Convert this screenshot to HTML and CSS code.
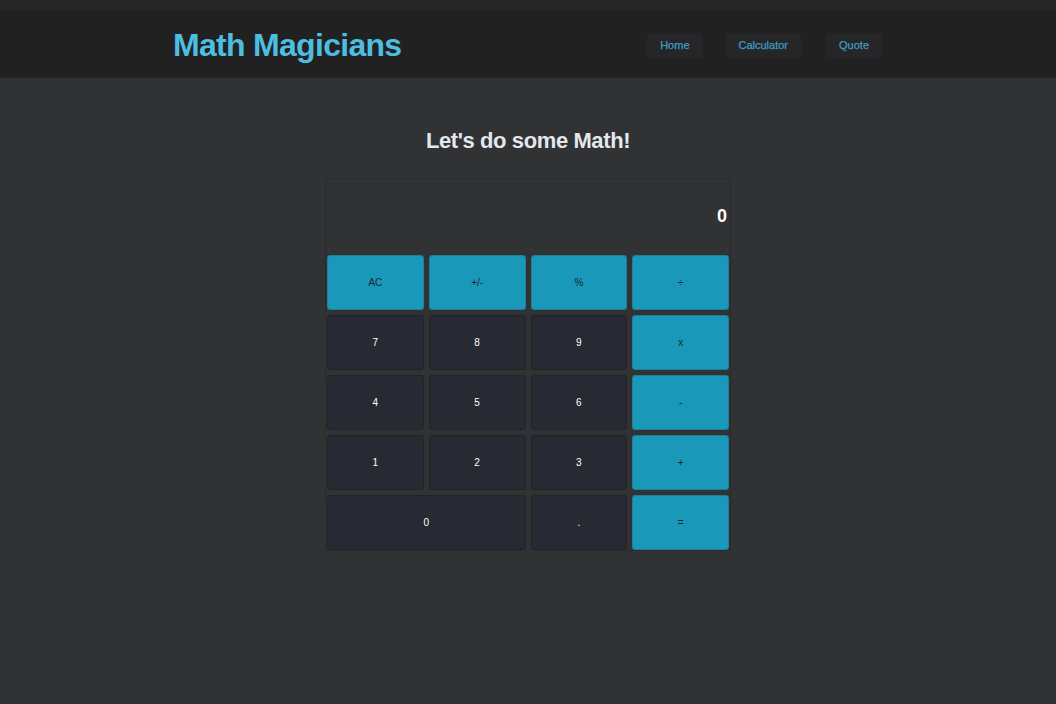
FILE: index.html
```html
<!DOCTYPE html>
<html lang="en">
<head>
<meta charset="utf-8">
<title>Math Magicians</title>
<link rel="stylesheet" href="styles.css">
</head>
<body>
<header class="site-header">
  <div class="header-inner">
    <h1 class="logo">Math Magicians</h1>
    <nav class="nav">
      <a class="nav-link" href="#">Home</a>
      <a class="nav-link" href="#">Calculator</a>
      <a class="nav-link" href="#">Quote</a>
    </nav>
  </div>
</header>
<main class="main">
  <h2 class="heading">Let's do some Math!</h2>
  <div class="calculator">
    <div class="display">0</div>
    <button class="key op">AC</button>
    <button class="key op">+/-</button>
    <button class="key op">%</button>
    <button class="key op">÷</button>
    <button class="key">7</button>
    <button class="key">8</button>
    <button class="key">9</button>
    <button class="key op">x</button>
    <button class="key">4</button>
    <button class="key">5</button>
    <button class="key">6</button>
    <button class="key op">-</button>
    <button class="key">1</button>
    <button class="key">2</button>
    <button class="key">3</button>
    <button class="key op">+</button>
    <button class="key wide">0</button>
    <button class="key">.</button>
    <button class="key op">=</button>
  </div>
</main>
</body>
</html>
```

FILE: styles.css
```css
* { box-sizing: border-box; }
html, body { margin: 0; padding: 0; }
body {
  background: #313234;
  font-family: "Liberation Sans", Arial, sans-serif;
  min-height: 704px;
}
.site-header {
  background: #212122;
  border-top: 10px solid #262628;
  height: 78px;
}
.header-inner {
  width: 710px;
  margin: 0 auto;
  height: 68px;
  display: flex;
  align-items: center;
  justify-content: space-between;
  padding-right: 1px;
}
.logo {
  margin: 0;
  color: #4dbde0;
  font-size: 32px;
  font-weight: bold;
  letter-spacing: -0.7px;
  padding-top: 2px;
}
.nav { display: flex; gap: 23px; padding-top: 2px; }
.nav-link {
  display: block;
  background: #262527;
  color: #3a9fc6;
  text-decoration: none;
  font-size: 11px;
  font-weight: normal;
  -webkit-text-stroke: 0.25px #3a9fc6;
  height: 25px;
  line-height: 25px;
  padding: 0 13px;
  border-radius: 3px;
}
.nav-link + .nav-link + .nav-link { margin-left: 2px; }
.main {
  display: flex;
  flex-direction: column;
  align-items: center;
  padding-top: 48px;
}
.heading {
  margin: 0 0 22px;
  color: #e3e8ee;
  font-size: 22px;
  font-weight: bold;
  letter-spacing: -0.4px;
  line-height: 30px;
}
.calculator {
  width: 406px;
  border: 1px solid #2a2b31;
  display: grid;
  grid-template-columns: repeat(4, 1fr);
  grid-template-rows: 71px repeat(5, 55px);
  column-gap: 5px;
  row-gap: 5px;
  padding: 0 1px 0 1px;
}
.display {
  grid-column: 1 / 5;
  display: flex;
  align-items: center;
  justify-content: flex-end;
  padding: 4px 2px 0 0;
  color: #ffffff;
  font-size: 18px;
  font-weight: bold;
}
.key {
  background: #272a33;
  color: #ffffff;
  border: 1px solid #222327;
  border-radius: 3px;
  font-family: "Liberation Sans", Arial, sans-serif;
  font-size: 10px;
  padding: 0;
}
.key.op {
  background: #1a98b9;
  color: #1d2328;
  border-color: #1d7f99;
}
.key.wide { grid-column: span 2; }
```
